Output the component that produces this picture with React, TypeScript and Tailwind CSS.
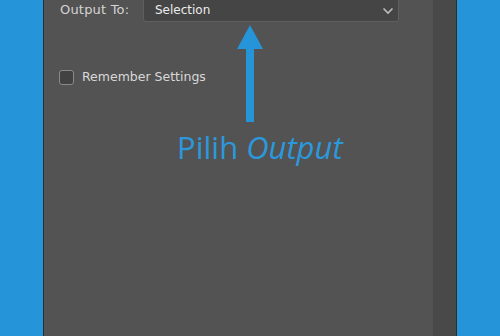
import React from 'react';

export default function App() {
  return (
    <div className="w-[500px] h-[336px] bg-[#2694d8] flex overflow-hidden" style={{ fontFamily: '"DejaVu Sans", sans-serif' }}>
      <div className="w-[43px] shrink-0" />
      <div className="w-[414px] shrink-0 flex border-x border-[#2e2e2e]">
        <div className="w-[389px] bg-[#535353] relative">
          <div className="flex items-center h-[25px] mt-[-3px] pl-[16px]">
            <span className="w-[83px] text-[13px] tracking-[0.2px] text-[#d4d4d4]">Output To:</span>
            <div className="w-[256px] h-[25px] bg-[#454545] border border-[#5f5f5f] rounded-[3px] flex items-center justify-between pl-[11px] pr-[4px]">
              <span className="text-[12px] text-[#ececec]">Selection</span>
              <svg width="12" height="8" viewBox="0 0 12 8" className="mt-[3px]">
                <path d="M1.5 1.5 L6 6 L10.5 1.5" fill="none" stroke="#bdbdbd" strokeWidth="1.6" />
              </svg>
            </div>
          </div>
          <div className="flex items-center pl-[15px] mt-[46px]">
            <div className="w-[15px] h-[15px] rounded-[3px] border border-[#8a8a8a] bg-[#424242]" />
            <span className="ml-[8px] text-[12.5px] text-[#d8d8d8]">Remember Settings</span>
          </div>
          <svg width="28" height="100" viewBox="0 0 28 100" className="absolute left-[192px] top-[25px]">
            <polygon points="14,0 27,24 18,24 18,97 10,97 10,24 1,24" fill="#2694d8" />
          </svg>
          <div className="absolute left-[133px] top-[132px] text-[31px] text-[#2b98dc] leading-none" style={{ fontFamily: '"Open Sans", sans-serif' }}>
            Pilih <span className="italic">Output</span>
          </div>
        </div>
        <div className="flex-1 bg-[#494949]" />
      </div>
    </div>
  );
}
